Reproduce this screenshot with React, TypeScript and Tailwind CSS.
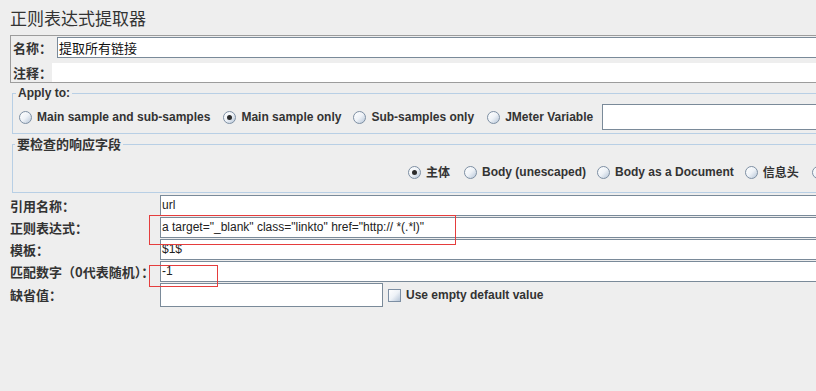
const latin = "font-['Liberation_Sans','Noto_Sans_CJK_SC',sans-serif]";
const cjk = "font-['Noto_Sans_CJK_SC','Liberation_Sans',sans-serif]";

function Radio({ checked }: { checked?: boolean }) {
  return (
    <span className="inline-flex h-[13px] w-[13px] shrink-0 items-center justify-center rounded-full border border-[#7d8fa3] bg-linear-to-br from-white via-[#eef2f7] to-[#b7c6d8]">
      {checked && <span className="h-[5px] w-[5px] rounded-full bg-[#2b2b2b]" />}
    </span>
  );
}

function RadioItem({ label, checked, font }: { label: string; checked?: boolean; font?: string }) {
  return (
    <div className="flex shrink-0 items-center">
      <Radio checked={checked} />
      <span className={`ml-[5px] text-[12px] font-bold leading-[16px] text-[#333] ${font ?? latin}`}>{label}</span>
    </div>
  );
}

function Field({ label, value }: { label: string; value?: string }) {
  return (
    <div className="mb-[1px] flex items-center">
      <span className={`w-[150px] shrink-0 text-[13px] font-bold leading-[21px] text-[#333] ${cjk}`}>{label}</span>
      <div className={`h-[21px] flex-1 border border-r-0 border-[#7a8a99] bg-white pl-[1px] text-[12px] leading-[19px] text-[#222] ${latin}`}>
        {value}
      </div>
    </div>
  );
}

export default function App() {
  return (
    <div className="relative h-[391px] w-[816px] overflow-hidden bg-[#eeeeee] text-[#333]">
      {/* Title */}
      <div className={`h-[35px] pl-[10px] pt-[6px] text-[17px] leading-[24px] text-[#333] ${cjk}`}>正则表达式提取器</div>

      {/* Name / comment panel */}
      <div className="ml-[10px] h-[48px] border border-r-0 border-[#9c9c9c] pl-[1px]">
        <div className="mt-[1px] flex h-[21px] items-center">
          <span className={`w-[45px] shrink-0 pl-[1px] text-[13px] font-bold ${cjk}`}>名称：</span>
          <div className={`h-[21px] flex-1 border border-r-0 border-[#7a8a99] bg-white pl-[1px] text-[13px] leading-[19px] text-[#111] ${cjk}`}>
            提取所有链接
          </div>
        </div>
        <div className="mt-[5px] flex h-[19px] items-center">
          <span className={`w-[40px] shrink-0 pl-[1px] text-[13px] font-bold ${cjk}`}>注释：</span>
          <div className="h-[19px] flex-1 bg-white" />
        </div>
      </div>

      {/* Apply to */}
      <fieldset className="ml-[12px] mt-[3px] w-[830px] border border-[#b8cfe5]">
        <legend className={`ml-[3px] px-[2px] text-[12px] font-bold leading-[14px] ${latin}`}>Apply to:</legend>
        <div className="mb-[3px] mt-[4px] flex h-[26px] items-center pl-[6px]">
          <RadioItem label="Main sample and sub-samples" />
          <div className="w-[13px] shrink-0" />
          <RadioItem label="Main sample only" checked />
          <div className="w-[12px] shrink-0" />
          <RadioItem label="Sub-samples only" />
          <div className="w-[13px] shrink-0" />
          <RadioItem label="JMeter Variable" />
          <div className="ml-[9px] h-[26px] flex-1 border border-r-0 border-[#7a8a99] bg-white" />
        </div>
      </fieldset>

      {/* Response field to check */}
      <fieldset className="ml-[12px] mt-[2px] w-[830px] border border-[#b8cfe5]">
        <legend className={`ml-[2px] px-[2px] text-[13px] font-bold leading-[16px] ${cjk}`}>要检查的响应字段</legend>
        <div className="box-content flex h-[16px] items-center whitespace-nowrap pb-[12px] pl-[395px] pt-[12px]">
          <RadioItem label="主体" checked font={cjk} />
          <div className="w-[14px] shrink-0" />
          <RadioItem label="Body (unescaped)" />
          <div className="w-[11px] shrink-0" />
          <RadioItem label="Body as a Document" />
          <div className="w-[11px] shrink-0" />
          <RadioItem label="信息头" font={cjk} />
          <div className="w-[13px] shrink-0" />
          <Radio />
        </div>
      </fieldset>

      {/* Fields */}
      <div className="mt-[2px] pl-[10px]">
        <Field label="引用名称：" value="url" />
        <Field label="正则表达式：" value={'a target="_blank" class="linkto" href="http:// *(.*l)"'} />
        <Field label="模板：" value="$1$" />
        <Field label="匹配数字（0代表随机）：" value="-1" />
        <div className="flex items-center">
          <span className={`w-[150px] shrink-0 text-[13px] font-bold text-[#333] ${cjk}`}>缺省值：</span>
          <div className="h-[24px] w-[223px] border border-[#7a8a99] bg-white" />
          <span className="ml-[5px] h-[13px] w-[13px] border border-[#7d8fa3] bg-linear-to-br from-white via-[#eef2f7] to-[#b7c6d8]" />
          <span className={`ml-[5px] text-[12px] font-bold text-[#333] ${latin}`}>Use empty default value</span>
        </div>
      </div>

      {/* Red annotation boxes */}
      <div className="absolute left-[149px] top-[215px] h-[30px] w-[307px] border border-[#e53d3d]" />
      <div className="absolute left-[149px] top-[265px] h-[22px] w-[69px] border border-[#e53d3d]" />
    </div>
  );
}
